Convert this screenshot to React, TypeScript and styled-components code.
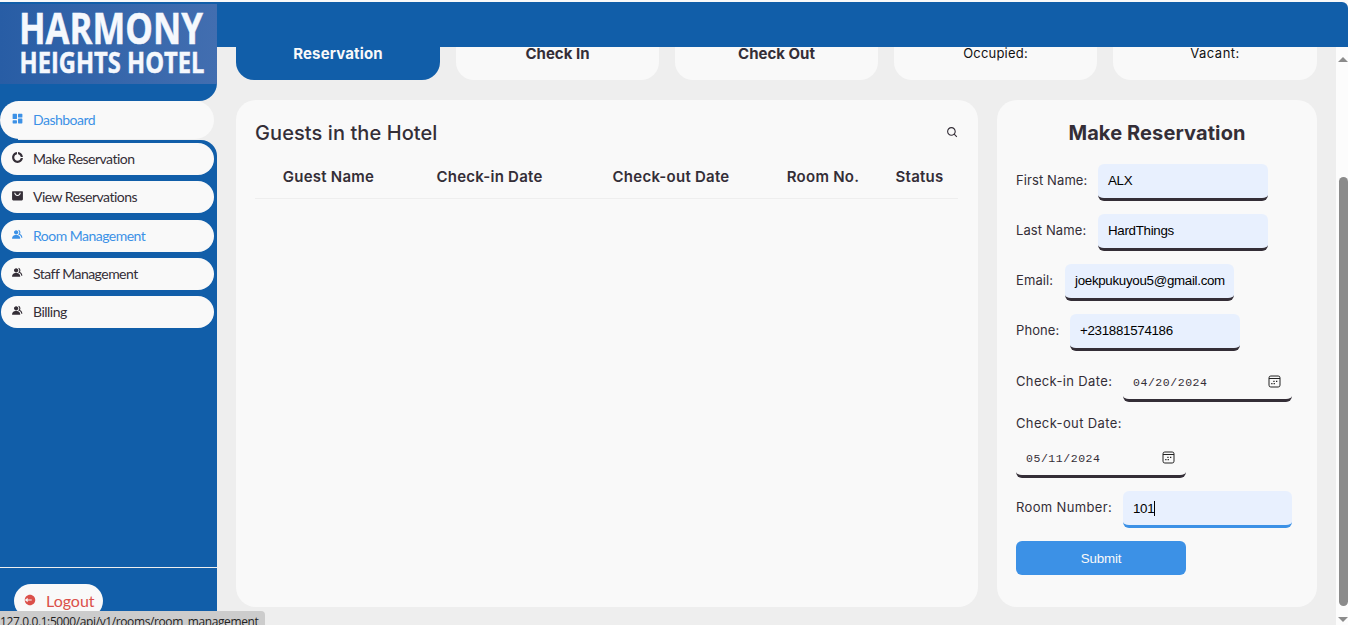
import React from "react";
import styled, { createGlobalStyle, css } from "styled-components";
import {
  BiSearch,
  BiSolidDashboard,
  BiSolidDoughnutChart,
  BiSolidGroup,
  BiSolidLogOutCircle,
  BiSolidShoppingBagAlt,
} from "react-icons/bi";

const BLUE = "#115ea9";
const LIGHT = "#f9f9f9";
const GREY = "#eeeeee";
const DARK = "#342e37";
const ACCENT = "#3c91e6";

const Global = createGlobalStyle`
  * { box-sizing: border-box; margin: 0; padding: 0; }
  body { background: ${LIGHT}; overflow: hidden; font-family: Inter, sans-serif; color: ${DARK}; }
`;

const Page = styled.div`
  display: flex;
  width: 1348px;
  height: 625px;
  padding-top: 2px;
  overflow: hidden;
  position: relative;
`;

const Sidebar = styled.aside`
  width: 217px;
  height: 623px;
  display: flex;
  flex-direction: column;
  background: ${GREY};
  flex: none;
`;

const Brand = styled.div`
  height: 99px;
  padding-top: 2px;
  background: ${BLUE};
  border-bottom-right-radius: 18px;
`;

const LogoArt = styled.svg`
  display: block;
`;

const ActiveRow = styled.div`
  height: 39px;
  background: linear-gradient(90deg, ${BLUE} 0 18px, ${GREY} 18px);
`;

const Menu = styled.nav`
  flex: 1;
  background: ${BLUE};
  border-top-right-radius: 16px;
  padding: 3px 3px 0 1px;
`;

const MenuItem = styled.a<{ $active?: boolean; $lit?: boolean; $gap?: number }>`
  display: flex;
  align-items: center;
  width: ${(p) => (p.$active ? 214 : 213)}px;
  height: ${(p) => (p.$active ? 38 : 32)}px;
  margin-bottom: ${(p) => p.$gap ?? 6}px;
  border-radius: 20px;
  background: ${LIGHT};
  padding: 0 0 2px ${(p) => (p.$active ? 11 : 10)}px;
  font: 400 14px Lato, sans-serif;
  letter-spacing: -0.52px;
  color: ${(p) => (p.$lit ? ACCENT : DARK)};
  svg { width: 13px; height: 13px; margin: -1px 9px 0 0; flex: none; }
`;

const LogoutArea = styled.div`
  height: 58px;
  background: ${BLUE};
  border-top: 1px solid ${GREY};
  padding: 16px 0 0 14px;
`;

const Logout = styled.a`
  display: flex;
  align-items: center;
  width: 89px;
  height: 34px;
  border-radius: 18px;
  background: ${LIGHT};
  color: #db504a;
  padding: 0 0 1px 9px;
  font: 400 16px Lato, sans-serif;
  svg { width: 14px; height: 14px; margin: -2px 9px 0 0; }
`;

const StatusBar = styled.div`
  position: absolute;
  left: 0;
  top: 611px;
  width: 265px;
  height: 20px;
  background: #cccccc;
  border-top-right-radius: 4px;
  color: #222;
  font: 12px/16px "Open Sans", sans-serif;
  padding-top: 3px;
  letter-spacing: -0.39px;
  white-space: nowrap;
`;

const Content = styled.div`
  width: 1131px;
  display: flex;
  flex-direction: column;
`;

const TopBar = styled.header`
  height: 45px;
  flex: none;
  background: ${BLUE};
  border-top-right-radius: 6px;
`;

const Body = styled.div`
  flex: 1;
  display: flex;
`;

const Main = styled.main`
  width: 1119px;
  background: ${GREY};
  padding: 0 19px;
`;

const Cards = styled.div`
  display: grid;
  grid-template-columns: 204px 203px 203px 203px 204px;
  column-gap: 16px;
  height: 33px;
`;

const Card = styled.div<{ $selected?: boolean; $plain?: boolean; $spacing?: number }>`
  border-radius: 0 0 18px 18px;
  background: ${(p) => (p.$selected ? BLUE : LIGHT)};
  color: ${(p) => (p.$selected ? LIGHT : p.$plain ? "#111" : DARK)};
  text-align: center;
  font-size: ${(p) => (p.$plain ? 13 : 15)}px;
  font-weight: ${(p) => (p.$plain ? 400 : 700)};
  line-height: 13px;
  letter-spacing: ${(p) => p.$spacing ?? 0}px;
`;

const Panels = styled.div`
  display: grid;
  grid-template-columns: 742px 320px;
  column-gap: 19px;
  height: 507px;
  margin-top: 20px;
`;

const Panel = styled.section`
  background: ${LIGHT};
  border-radius: 20px;
  padding: 20px 19px;
`;

const PanelHead = styled.div`
  display: flex;
  justify-content: space-between;
  height: 28px;
  svg { width: 13px; height: 13px; margin: 6px 0 0; }
`;

const Title = styled.h3<{ $bold?: boolean }>`
  font-size: 20px;
  line-height: 27px;
  font-weight: ${(p) => (p.$bold ? 700 : 500)};
  text-align: ${(p) => (p.$bold ? "center" : "left")};
  letter-spacing: ${(p) => (p.$bold ? 0.12 : 0.08)}px;
`;

const TableHead = styled.div`
  display: grid;
  grid-template-columns: 147px 175px 188px 116px 77px;
  width: 703px;
  height: 51px;
  line-height: 58px;
  border-bottom: 1px solid ${GREY};
  font-size: 15px;
  font-weight: 600;
  letter-spacing: 0.25px;
  text-align: center;
`;

const Form = styled.form`
  margin-top: 17px;
`;

const Field = styled.div<{ $height: number; $gap?: number }>`
  display: flex;
  height: ${(p) => p.$height}px;
  margin-bottom: ${(p) => p.$gap ?? 13}px;
`;

const Label = styled.label<{ $width: number; $spacing?: number }>`
  width: ${(p) => p.$width}px;
  flex: none;
  font-size: 13px;
  line-height: 33px;
  white-space: nowrap;
  letter-spacing: ${(p) => p.$spacing ?? 0.1}px;
`;

const inputBox = css`
  height: 37px;
  border-radius: 6px;
  border-bottom: 3px solid ${DARK};
  display: flex;
  align-items: center;
`;

const Input = styled.div<{ $width?: number; $focus?: boolean }>`
  ${inputBox}
  width: ${(p) => p.$width ?? 170}px;
  background: #e8f0fe;
  padding: 0 0 1px 10px;
  color: #000;
  font: 13.33px "Liberation Sans", sans-serif;
  letter-spacing: -0.3px;
  ${(p) => p.$focus && css`border-bottom-color: ${ACCENT}; padding-bottom: 0;`}
`;

const Caret = styled.span`
  width: 1px;
  height: 15px;
  background: #000;
`;

const DateInput = styled.div<{ $width?: number }>`
  ${inputBox}
  width: ${(p) => p.$width ?? 170}px;
  justify-content: space-between;
  padding: 1px 11px 0 10px;
  font: 11.5px "Liberation Mono", monospace;
  letter-spacing: 0.55px;
  svg { margin-top: -2px; }
`;

const Submit = styled.button`
  display: block;
  width: 170px;
  height: 34px;
  border: 0;
  border-radius: 6px;
  background: ${ACCENT};
  color: ${LIGHT};
  font: 13.33px "Liberation Sans", sans-serif;
  letter-spacing: -0.2px;
`;

const ScrollTrack = styled.div`
  width: 12px;
  display: flex;
  flex-direction: column;
  align-items: flex-end;
  background: #fcfcfc;
  padding-top: 10px;
`;

const Thumb = styled.div`
  width: 9px;
  height: 429px;
  margin: 115px 0 11px;
  border-radius: 5px;
  background: #8b8b8b;
`;

const Arrow = styled.div<{ $down?: boolean }>`
  border: 5px solid transparent;
  border-top-width: ${(p) => (p.$down ? 5 : 0)}px;
  border-bottom-width: ${(p) => (p.$down ? 0 : 5)}px;
  ${(p) => (p.$down ? "border-top-color" : "border-bottom-color")}: #8b8b8b;
`;

const CalendarIcon = () => (
  <svg width="13" height="13" viewBox="0 0 13 13" fill="none" stroke="#222">
    <rect x="1" y="1" width="11" height="11" rx="1.8" />
    <path d="M1 3.5h11" />
    <path d="M5.3 6.3h1.3M8 6.3h1.3M3.2 8.7h1.3M5.6 8.7h1.3" strokeWidth="1.3" />
  </svg>
);

const Logo = () => (
  <LogoArt width="217" height="80" viewBox="0 0 217 80">
    <defs>
      <linearGradient id="brand" x1="0" x2="1">
        <stop offset="0" stopColor="#285da5" />
        <stop offset="1" stopColor="#426eb0" />
      </linearGradient>
    </defs>
    <rect width="217" height="80" fill="url(#brand)" />
    <g fill="#f5f8fd" stroke="#f5f8fd" strokeWidth="0.5" fontFamily="Open Sans, sans-serif" fontWeight="700">
      <text x="19" y="39.5" fontSize="43" textLength="184" lengthAdjust="spacingAndGlyphs">HARMONY</text>
      <text x="19.5" y="68.5" fontSize="29" textLength="185" lengthAdjust="spacingAndGlyphs">HEIGHTS HOTEL</text>
    </g>
  </LogoArt>
);

export default function App() {
  return (
    <>
      <Global />
      <Page>
        <Sidebar>
          <Brand><Logo /></Brand>
          <ActiveRow>
            <MenuItem $active $lit><BiSolidDashboard />Dashboard</MenuItem>
          </ActiveRow>
          <Menu>
            <MenuItem><BiSolidDoughnutChart />Make Reservation</MenuItem>
            <MenuItem $gap={7}><BiSolidShoppingBagAlt />View Reservations</MenuItem>
            <MenuItem $lit><BiSolidGroup />Room Management</MenuItem>
            <MenuItem><BiSolidGroup />Staff Management</MenuItem>
            <MenuItem><BiSolidGroup />Billing</MenuItem>
          </Menu>
          <LogoutArea>
            <Logout><BiSolidLogOutCircle />Logout</Logout>
          </LogoutArea>
        </Sidebar>
        <Content>
          <TopBar />
          <Body>
            <Main>
              <Cards>
                <Card $selected $spacing={0.15}>Reservation</Card>
                <Card>Check In</Card>
                <Card>Check Out</Card>
                <Card $plain $spacing={0.2}>Occupied:</Card>
                <Card $plain $spacing={0.5}>Vacant:</Card>
              </Cards>
              <Panels>
                <Panel>
                  <PanelHead>
                    <Title>Guests in the Hotel</Title>
                    <BiSearch />
                  </PanelHead>
                  <TableHead>
                    <span>Guest Name</span>
                    <span>Check-in Date</span>
                    <span>Check-out Date</span>
                    <span>Room No.</span>
                    <span>Status</span>
                  </TableHead>
                </Panel>
                <Panel>
                  <Title $bold>Make Reservation</Title>
                  <Form>
                    <Field $height={37}><Label $width={82}>First Name:</Label><Input>ALX</Input></Field>
                    <Field $height={37}><Label $width={82}>Last Name:</Label><Input>HardThings</Input></Field>
                    <Field $height={37}><Label $width={49}>Email:</Label><Input $width={169}>joekpukuyou5@gmail.com</Input></Field>
                    <Field $height={37} $gap={14}><Label $width={54}>Phone:</Label><Input>+231881574186</Input></Field>
                    <Field $height={37} $gap={5}><Label $width={107} $spacing={0.35}>Check-in Date:</Label><DateInput $width={169}>04/20/2024<CalendarIcon /></DateInput></Field>
                    <Field $height={34} $gap={0}><Label $width={107} $spacing={0.37}>Check-out Date:</Label></Field>
                    <Field $height={37}><DateInput>05/11/2024<CalendarIcon /></DateInput></Field>
                    <Field $height={37}><Label $width={107} $spacing={0.35}>Room Number:</Label><Input $focus $width={169}>101<Caret /></Input></Field>
                    <Submit type="button">Submit</Submit>
                  </Form>
                </Panel>
              </Panels>
            </Main>
            <ScrollTrack>
              <Arrow />
              <Thumb />
              <Arrow $down />
            </ScrollTrack>
          </Body>
        </Content>
        <StatusBar>127.0.0.1:5000/api/v1/rooms/room_management</StatusBar>
      </Page>
    </>
  );
}
